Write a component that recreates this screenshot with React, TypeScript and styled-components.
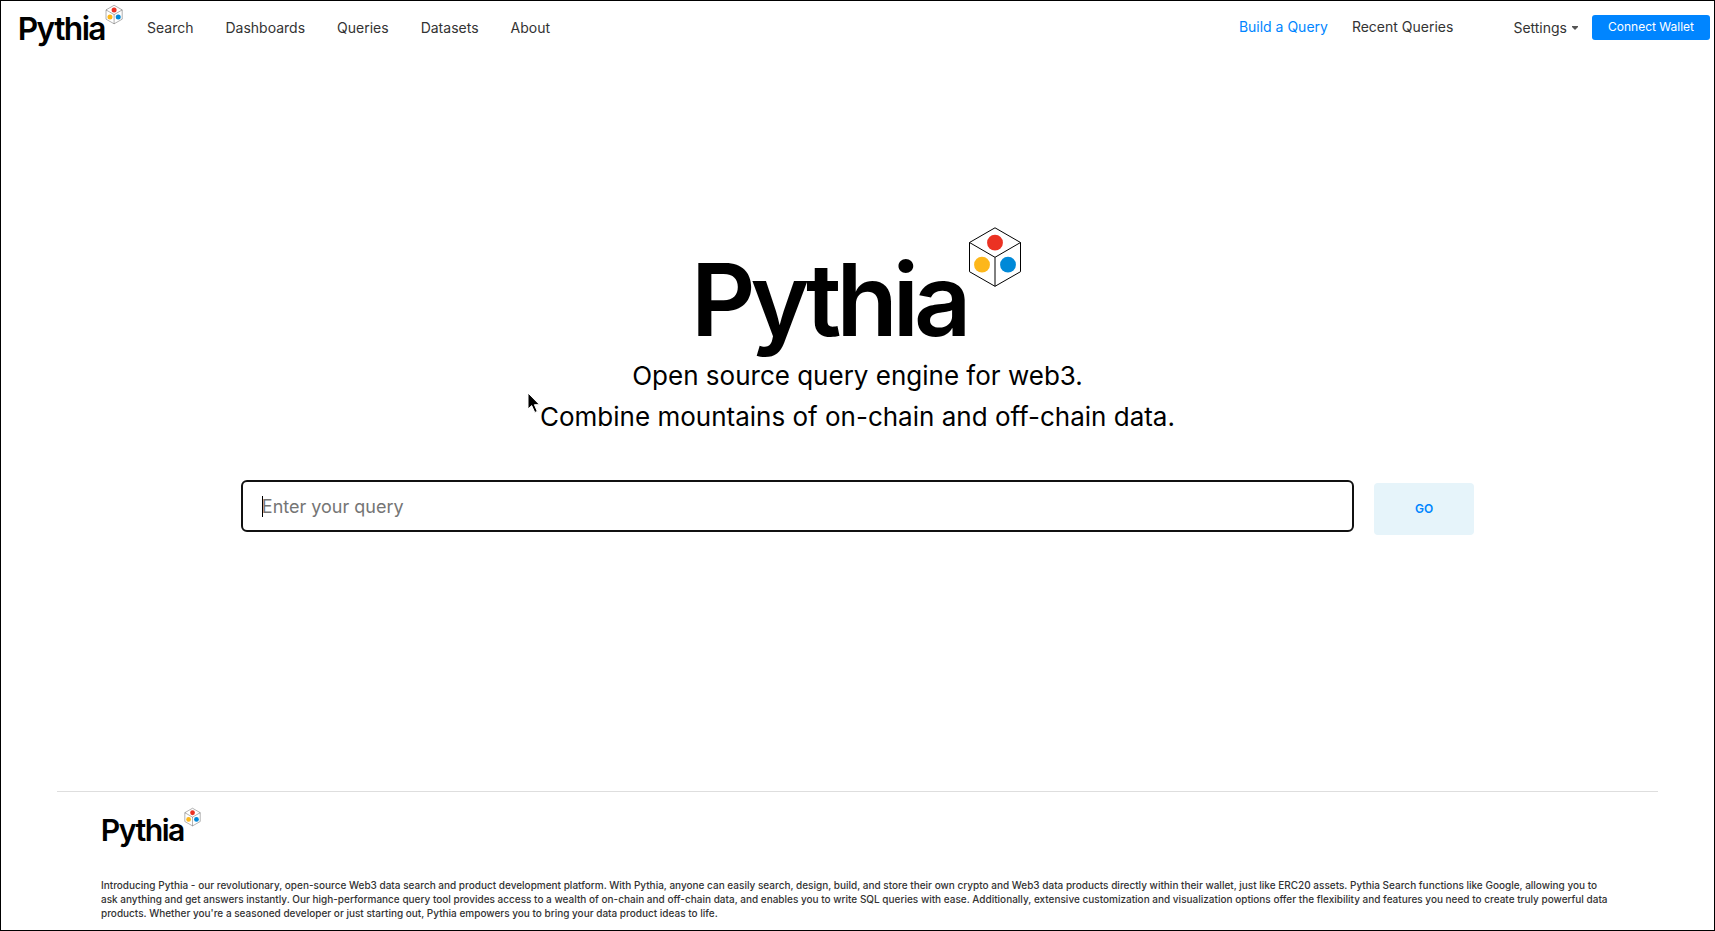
import React from "react";
import styled, { createGlobalStyle } from "styled-components";

const GlobalStyle = createGlobalStyle`
  *, *::before, *::after { box-sizing: border-box; }
  body {
    margin: 0;
    background: #fff;
    color: #000;
    font-family: Inter, "Liberation Sans", sans-serif;
  }
`;

const Page = styled.div`
  display: flex;
  flex-direction: column;
  min-height: 100vh;
  border: 1px solid #000;
`;

const Header = styled.header`
  display: flex;
  align-items: flex-start;
  padding: 4px 4px 0 17px;
`;

const LogoSvg = styled.svg<{ $width: number }>`
  display: block;
  flex: none;
  width: ${(p) => p.$width}px;
  height: auto;
  overflow: visible;
`;

const LogoText = styled.text`
  font-size: 100px;
  font-weight: 600;
  letter-spacing: -0.05em;
`;

const NavGroup = styled.nav<{ $gap: number; $top: number }>`
  display: flex;
  gap: ${(p) => p.$gap}px;
  padding-top: ${(p) => p.$top}px;
`;

const MainNav = styled(NavGroup)`
  margin-left: 24px;
`;

const QueryNav = styled(NavGroup)`
  margin-left: auto;
`;

const NavLink = styled.a<{ $active?: boolean }>`
  color: ${(p) => (p.$active ? "#0085ff" : "#333")};
  font-size: 14px;
  line-height: 20px;
  text-decoration: none;
  white-space: nowrap;
`;

const SettingsButton = styled.button`
  display: flex;
  align-items: center;
  gap: 5px;
  margin: 13px 14px 0 60px;
  padding: 0;
  border: 0;
  background: none;
  color: #333;
  font: inherit;
  font-size: 14px;
  line-height: 20px;
`;

const WalletButton = styled.button`
  height: 25px;
  margin-top: 10px;
  padding: 0 16px 2px;
  border: 0;
  border-radius: 3px;
  background: #0085ff;
  color: #fff;
  font: inherit;
  font-size: 12px;
  line-height: 20px;
  white-space: nowrap;
`;

const Hero = styled.main`
  position: relative;
  display: flex;
  flex: 1;
  flex-direction: column;
  align-items: center;
  padding-top: 181px;
`;

const Tagline = styled.h1`
  margin: 0;
  font-size: 26px;
  font-weight: 400;
  line-height: 41px;
  text-align: center;
`;

const SearchForm = styled.form`
  display: flex;
  gap: 20px;
  width: 72%;
  margin-top: 43px;
`;

const InputWrap = styled.div`
  position: relative;
  flex: 1;
`;

const QueryInput = styled.input`
  display: block;
  width: 100%;
  height: 52px;
  padding: 1px 19px 0;
  border: 2px solid #111;
  border-radius: 6px;
  background: #fff;
  font: inherit;
  font-size: 18px;
  outline: none;

  &::placeholder {
    color: #757575;
    opacity: 1;
  }
`;

const Caret = styled.span`
  position: absolute;
  top: 16px;
  left: 21px;
  width: 1px;
  height: 21px;
  background: #000;
`;

const GoButton = styled.button`
  width: 100px;
  height: 52px;
  margin-top: 3px;
  border: 0;
  border-radius: 4px;
  background: #e6f4fa;
  color: #0085ff;
  font: inherit;
  font-size: 12px;
  font-weight: 600;
`;

const Pointer = styled.svg`
  position: absolute;
  top: 346px;
  left: calc(50% - 331px);
  width: 14px;
  height: 22px;
`;

const Footer = styled.footer`
  margin: 0 56px;
  padding: 16px 44px 10px;
  border-top: 1px solid #dedede;
`;

const FooterText = styled.p`
  margin: 31px 0 0;
  color: #333;
  font-size: 10px;
  font-weight: 500;
  line-height: 14px;
`;

function Logo({ width }: { width: number }) {
  return (
    <LogoSvg $width={width} viewBox="-5 0 331 128" role="img" aria-label="Pythia">
      <LogoText x="-6" y="109">Pythia</LogoText>
      <path
        d="M298 .8 323.5 15.5V44.7L298 59.3 272.5 44.7V15.5ZM272.5 15.5 298 30.3 323.5 15.5M298 30.3V59.3"
        fill="none"
        stroke="#000"
        strokeWidth="1"
      />
      <circle cx="298" cy="15.7" r="7.9" fill="#eb3223" />
      <circle cx="285" cy="37.7" r="7.9" fill="#fdb71a" />
      <circle cx="311" cy="37.7" r="7.9" fill="#0089d8" />
    </LogoSvg>
  );
}

const sections = ["Search", "Dashboards", "Queries", "Datasets", "About"];

export default function App() {
  return (
    <>
      <GlobalStyle />
      <Page>
        <Header>
          <Logo width={105} />
          <MainNav $gap={32} $top={13} aria-label="Main">
            {sections.map((name) => (
              <NavLink key={name} href="#">{name}</NavLink>
            ))}
          </MainNav>
          <QueryNav $gap={24} $top={12} aria-label="Queries">
            <NavLink href="#" $active>Build a Query</NavLink>
            <NavLink href="#">Recent Queries</NavLink>
          </QueryNav>
          <SettingsButton type="button">
            Settings
            <svg width="6" height="4" viewBox="0 0 6 4" aria-hidden="true">
              <path d="M0 0H6V1L3 4 0 1Z" fill="#555" />
            </svg>
          </SettingsButton>
          <WalletButton type="button">Connect Wallet</WalletButton>
        </Header>
        <Hero>
          <Logo width={331} />
          <Tagline>
            Open source query engine for web3.
            <br />
            Combine mountains of on-chain and off-chain data.
          </Tagline>
          <SearchForm onSubmit={(e) => e.preventDefault()}>
            <InputWrap>
              <QueryInput type="text" placeholder="Enter your query" aria-label="Enter your query" />
              <Caret />
            </InputWrap>
            <GoButton type="submit">GO</GoButton>
          </SearchForm>
          <Pointer viewBox="0 0 14 22" aria-hidden="true">
            <path d="M1 1V17L4.7 13.6 7.8 20.5 10.3 19.4 7.4 12.7H12.5Z" fill="#000" stroke="#fff" />
          </Pointer>
        </Hero>
        <Footer>
          <Logo width={100} />
          <FooterText>
            Introducing Pythia - our revolutionary, open-source Web3 data search and product development
            platform. With Pythia, anyone can easily search, design, build, and store their own crypto and
            Web3 data products directly within their wallet, just like ERC20 assets. Pythia Search functions
            like Google, allowing you to ask anything and get answers instantly. Our high-performance query
            tool provides access to a wealth of on-chain and off-chain data, and enables you to write SQL
            queries with ease. Additionally, extensive customization and visualization options offer the
            flexibility and features you need to create truly powerful data products. Whether you're a
            seasoned developer or just starting out, Pythia empowers you to bring your data product ideas to
            life.
          </FooterText>
        </Footer>
      </Page>
    </>
  );
}
